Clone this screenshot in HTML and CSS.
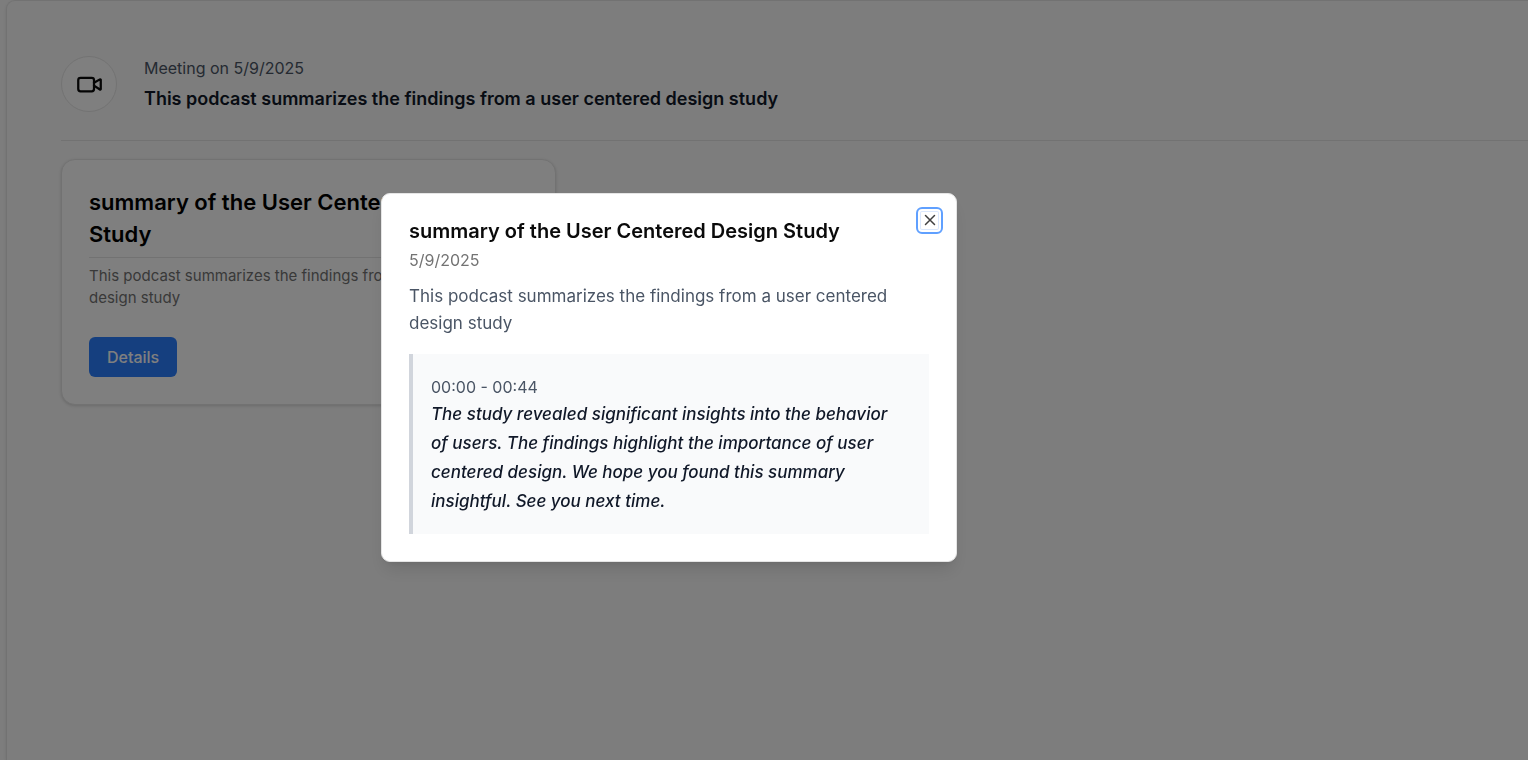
FILE: index.html
```html
<!DOCTYPE html>
<html lang="en">
<head>
<meta charset="utf-8">
<meta name="viewport" content="width=device-width, initial-scale=1">
<title>Meeting on 5/9/2025</title>
<link rel="stylesheet" href="styles.css">
</head>
<body>
<main class="panel">
  <header class="meeting">
    <div class="meeting-icon">
      <svg width="27" height="27" viewBox="0 0 24 24" fill="none" stroke="currentColor" stroke-width="2" stroke-linecap="round" stroke-linejoin="round" aria-hidden="true"><path d="m16 13 5.223 3.482a.5.5 0 0 0 .777-.416V7.87a.5.5 0 0 0-.752-.432L16 10.5"/><rect x="2" y="6" width="14" height="12" rx="2"/></svg>
    </div>
    <div class="meeting-text">
      <p class="meeting-date">Meeting on 5/9/2025</p>
      <h1 class="meeting-title">This podcast summarizes the findings from a user centered design study</h1>
    </div>
  </header>
  <article class="card">
    <h2 class="card-title">summary of the User Centered Design Study</h2>
    <p class="card-text">This podcast summarizes the findings from a user centered design study</p>
    <button class="details" type="button">Details</button>
  </article>
</main>
<div class="overlay">
  <section class="dialog" role="dialog" aria-modal="true" aria-labelledby="dialog-title">
    <button class="close" type="button" aria-label="Close">
      <svg width="18" height="18" viewBox="0 0 24 24" fill="none" stroke="currentColor" stroke-width="2" stroke-linecap="round" aria-hidden="true"><path d="M18 6 6 18M6 6l12 12"/></svg>
    </button>
    <h2 class="dialog-title" id="dialog-title">summary of the User Centered Design Study</h2>
    <p class="dialog-date">5/9/2025</p>
    <p class="dialog-text">This podcast summarizes the findings from a user centered design study</p>
    <blockquote class="quote">
      <p class="quote-time">00:00 - 00:44</p>
      <p class="quote-text">The study revealed significant insights into the behavior of users. The findings highlight the importance of user centered design. We hope you found this summary insightful. See you next time.</p>
    </blockquote>
  </section>
</div>
</body>
</html>
```
FILE: styles.css
```css
* { box-sizing: border-box; }

body {
  margin: 0;
  min-height: 100vh;
  display: flex;
  padding-left: 6px;
  background: #fafafa;
  font-family: Inter, "Liberation Sans", sans-serif;
  font-size: 16px;
  color: #0a0a0a;
  overflow: hidden;
}

h1, h2, p, blockquote { margin: 0; }
button { font: inherit; cursor: pointer; }

.panel {
  flex: 1;
  padding: 55px 0 0 54px;
  border: 1px solid #e5e5e5;
  border-width: 1px 0 0 1px;
  border-top-left-radius: 9px;
  background: #fafafa;
  box-shadow: 0 1px 3px rgba(0, 0, 0, 0.1);
}

.meeting {
  display: flex;
  align-items: center;
  gap: 27px;
  padding-bottom: 28px;
  border-bottom: 1px solid #e5e5e5;
}

.meeting-icon {
  display: grid;
  place-items: center;
  width: 56px;
  height: 56px;
  border: 1px solid #e5e5e5;
  border-radius: 50%;
  background: #fff;
}

.meeting-date {
  font-size: 16px;
  line-height: 24px;
  color: #4a5565;
}

.meeting-title {
  margin-top: 5px;
  font-size: 18px;
  line-height: 27px;
  font-weight: 600;
  color: #101828;
}

.card {
  max-width: 495px;
  margin-top: 18px;
  padding: 26px 27px 27px;
  border: 1px solid #e5e5e5;
  border-radius: 14px;
  background: #fff;
  box-shadow: 0 1px 3px rgba(0, 0, 0, 0.15);
}

.card-title {
  padding-bottom: 7px;
  border-bottom: 1px solid #e5e5e5;
  font-size: 22px;
  line-height: 32px;
  font-weight: 600;
  color: #000;
}

.card-text {
  margin-top: 7px;
  font-size: 15px;
  line-height: 22px;
  color: #737373;
}

.details {
  height: 40px;
  margin-top: 28px;
  padding: 0 18px;
  border: 0;
  border-radius: 6px;
  background: #2b7fff;
  color: #fff;
  font-size: 16px;
  font-weight: 500;
}

.overlay {
  position: fixed;
  inset: 0;
  display: flex;
  align-items: center;
  justify-content: center;
  padding: 0 190px 6px 0;
  background: rgba(0, 0, 0, 0.5);
}

.dialog {
  position: relative;
  width: 576px;
  padding: 24px 27px 27px;
  border: 1px solid #e5e5e5;
  border-radius: 9px;
  background: #fff;
  box-shadow: 0 11px 17px -3px rgba(0, 0, 0, 0.1), 0 4px 7px -4px rgba(0, 0, 0, 0.1);
}

.close {
  position: absolute;
  top: 13px;
  right: 13px;
  display: grid;
  place-items: center;
  width: 27px;
  height: 27px;
  padding: 0;
  border: 2px solid #60a0ff;
  border-radius: 6px;
  background: #fff;
  box-shadow: inset 0 0 0 2px #fff, inset 0 0 0 3px #dbe8fe;
  color: #404040;
}

.dialog-title {
  font-size: 20px;
  line-height: 27px;
  font-weight: 600;
}

.dialog-date {
  margin-top: 2px;
  font-size: 16px;
  line-height: 26px;
  color: #737373;
}

.dialog-text {
  margin-top: 10px;
  font-size: 17px;
  line-height: 27px;
  color: #4a5565;
}

.quote {
  margin-top: 17px;
  padding: 20px 27px 18px 18px;
  border-left: 4px solid #d1d5dc;
  background: #f9fafb;
}

.quote-time {
  font-size: 16px;
  line-height: 26px;
  color: #4a5565;
}

.quote-text {
  font-size: 17px;
  line-height: 29px;
  font-weight: 500;
  font-style: italic;
  color: #101828;
}
```
